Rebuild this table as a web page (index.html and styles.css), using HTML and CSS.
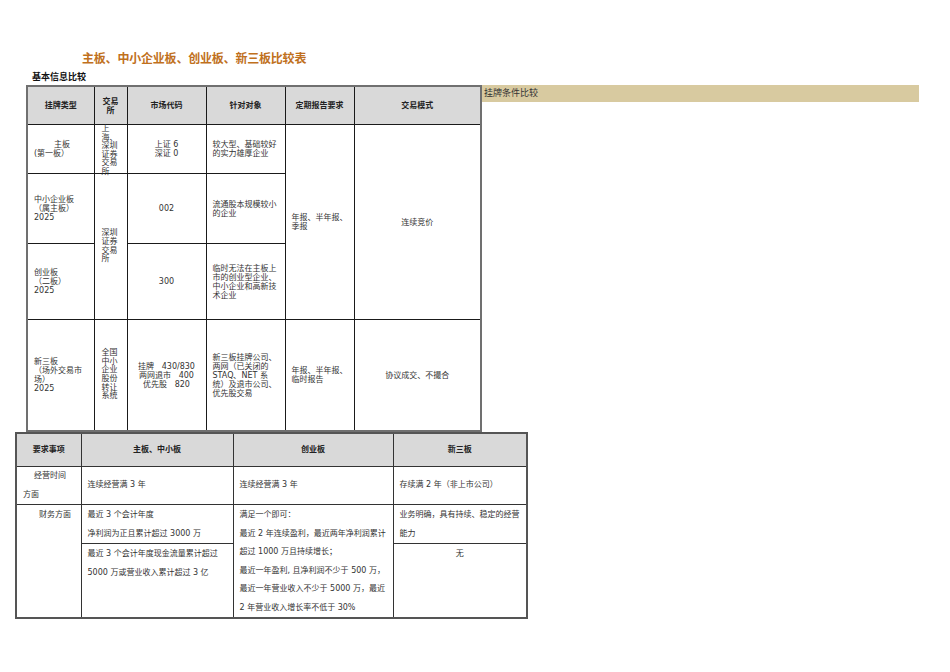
FILE: index.html
```html
<!DOCTYPE html>
<html lang="zh-CN">
<head>
<meta charset="utf-8">
<title>主板、中小企业板、创业板、新三板比较表</title>
<link rel="stylesheet" href="styles.css">
</head>
<body>
<div class="page">
  <h1 class="title">主板、中小企业板、创业板、新三板比较表</h1>
  <h2 class="subtitle">基本信息比较</h2>
  <div class="row">
    <table class="t1">
      <colgroup>
        <col style="width:67px"><col style="width:33px"><col style="width:79px"><col style="width:79px"><col style="width:69px"><col style="width:127px">
      </colgroup>
      <thead>
        <tr class="h">
          <th>挂牌类型</th>
          <th><div class="narrow">交易所</div></th>
          <th>市场代码</th>
          <th>针对对象</th>
          <th>定期报告要求</th>
          <th>交易模式</th>
        </tr>
      </thead>
      <tbody>
        <tr class="r1">
          <td class="type"><span class="ind">主板</span><br>(第一板）</td>
          <td class="ex"><div class="narrow first">上海、深圳证券交易所</div></td>
          <td class="c">上证 6<br>深证 0</td>
          <td class="l">较大型、基础较好的实力雄厚企业</td>
          <td class="l" rowspan="3">年报、半年报、季报</td>
          <td class="c" rowspan="3">连续竞价</td>
        </tr>
        <tr class="r2">
          <td class="type">中小企业板<br>（属主板）<br><span class="num">2025</span></td>
          <td class="ex" rowspan="2"><div class="narrow">深圳证券交易所</div></td>
          <td class="c num">002</td>
          <td class="l">流通股本规模较小的企业</td>
        </tr>
        <tr class="r3">
          <td class="type">创业板<br>（二板）<br><span class="num">2025</span></td>
          <td class="c num">300</td>
          <td class="l">临时无法在主板上市的创业型企业、中小企业和高新技术企业</td>
        </tr>
        <tr class="r4">
          <td class="type">新三板<br>（场外交易市场）<br><span class="num">2025</span></td>
          <td class="ex"><div class="narrow">全国中小企业股份转让系统</div></td>
          <td class="c codes">挂牌   <span class="num">430/830</span><br>两网退市   <span class="num">400</span><br>优先股   <span class="num">820</span></td>
          <td class="l">新三板挂牌公司、两网（已关闭的<span class="num">STAQ、NET</span> 系统）及退市公司、优先股交易</td>
          <td class="l">年报、半年报、临时报告</td>
          <td class="c">协议成交、不撮合</td>
        </tr>
      </tbody>
    </table>
    <div class="bar">挂牌条件比较</div>
  </div>

  <table class="t2">
    <colgroup>
      <col style="width:65px"><col style="width:152px"><col style="width:160px"><col style="width:134px">
    </colgroup>
    <thead>
      <tr class="h">
        <th>要求事项</th>
        <th>主板、中小板</th>
        <th>创业板</th>
        <th>新三板</th>
      </tr>
    </thead>
    <tbody>
      <tr class="q1">
        <td class="item"><span class="ind2">经营时间</span><br>方面</td>
        <td>连续经营满 <span class="num">3</span> 年</td>
        <td>连续经营满 <span class="num">3</span> 年</td>
        <td>存续满 <span class="num">2</span> 年（非上市公司）</td>
      </tr>
      <tr class="q2">
        <td class="item top" rowspan="2"><span class="ind3">财务方面</span></td>
        <td class="top">最近 <span class="num">3</span> 个会计年度<br>净利润为正且累计超过 <span class="num">3000</span> 万</td>
        <td class="top" rowspan="2">满足一个即可：<br>最近 <span class="num">2</span> 年连续盈利，最近两年净利润累计<br>超过 <span class="num">1000</span> 万且持续增长；<br>最近一年盈利, 且净利润不少于 <span class="num">500</span> 万，<br>最近一年营业收入不少于 <span class="num">5000</span> 万，最近<br><span class="num">2</span> 年营业收入增长率不低于 <span class="num">30%</span></td>
        <td class="top">业务明确，具有持续、稳定的经营能力</td>
      </tr>
      <tr class="q3">
        <td class="top">最近 <span class="num">3</span> 个会计年度现金流量累计超过<br><span class="num">5000</span> 万或营业收入累计超过 <span class="num">3</span> 亿</td>
        <td class="top c">无</td>
      </tr>
    </tbody>
  </table>
</div>
</body>
</html>
```

FILE: styles.css
```css
html, body {
  margin: 0;
  padding: 0;
  background: #ffffff;
}
body {
  font-family: "DejaVu Sans", "Noto Sans CJK SC", sans-serif;
  color: #333;
}
.page {
  width: 950px;
  height: 672px;
  overflow: hidden;
}
.title {
  margin: 52px 0 0 82px;
  font-size: 12px;
  line-height: 14px;
  font-weight: bold;
  color: #c0701c;
  letter-spacing: -0.2px;
}
.subtitle {
  margin: 5px 0 0 32px;
  font-size: 9px;
  line-height: 12px;
  font-weight: bold;
  color: #111;
}
.row {
  display: flex;
  align-items: flex-start;
  margin: 2px 0 0 26px;
}
table {
  border-collapse: collapse;
  table-layout: fixed;
}
.t1 {
  width: 454px;
  border: 2px solid #707070;
  font-size: 8px;
  line-height: 9px;
}
.t1 th, .t1 td {
  border: 1px solid #1a1a1a;
  padding: 0 6px;
  overflow: visible;
}
.t1 th {
  background: #d9d9d9;
  font-weight: bold;
  color: #222;
  text-align: center;
  height: 37px;
}
.t1 td {
  vertical-align: middle;
}
.t1 .r1 td { height: 48px; }
.t1 .r2 td { height: 69px; }
.t1 .r3 td { height: 75px; }
.t1 .r4 td { height: 110px; }
.t1 .type {
  padding-left: 6px;
  text-align: left;
}
.ind { padding-left: 20px; }
.t1 .ex {
  padding: 0 0 0 7px;
  text-align: left;
}
.narrow {
  width: 17px;
  line-height: 8.6px;
  margin: 0 auto;
}
.narrow.first {
  height: 40px;
  line-height: 8.6px;
  margin-top: -8px;
  overflow: visible;
}
.t1 th .narrow { width: 17px; margin: 0 auto; line-height: 9px; }
.t1 .ex .narrow { margin-left: 0; }
.c { text-align: center; }
.l { text-align: left; }
.codes { white-space: pre; }
.num { font-family: "DejaVu Sans", sans-serif; }
.bar {
  width: 435px;
  height: 17px;
  background: #d8caa0;
  font-size: 9px;
  line-height: 17px;
  padding-left: 2px;
  color: #333;
}
.t2 {
  width: 511px;
  margin: 0 0 0 15px;
  border: 2px solid #555;
  font-size: 8px;
  line-height: 18.5px;
}
.t2 th, .t2 td {
  border: 1px solid #333;
  padding: 0 6px;
}
.t2 th {
  background: #d9d9d9;
  font-weight: bold;
  color: #222;
  height: 32px;
  text-align: center;
}
.t2 td { vertical-align: middle; }
.t2 .q1 td { height: 37px; }
.t2 .q2 td { height: 37px; }
.t2 .q3 td { height: 71px; }
.t2 .top { vertical-align: top; padding-top: 1px; }
.t2 .item { padding-left: 6px; }
.ind2 { padding-left: 11px; }
.ind3 { padding-left: 16px; }
```
